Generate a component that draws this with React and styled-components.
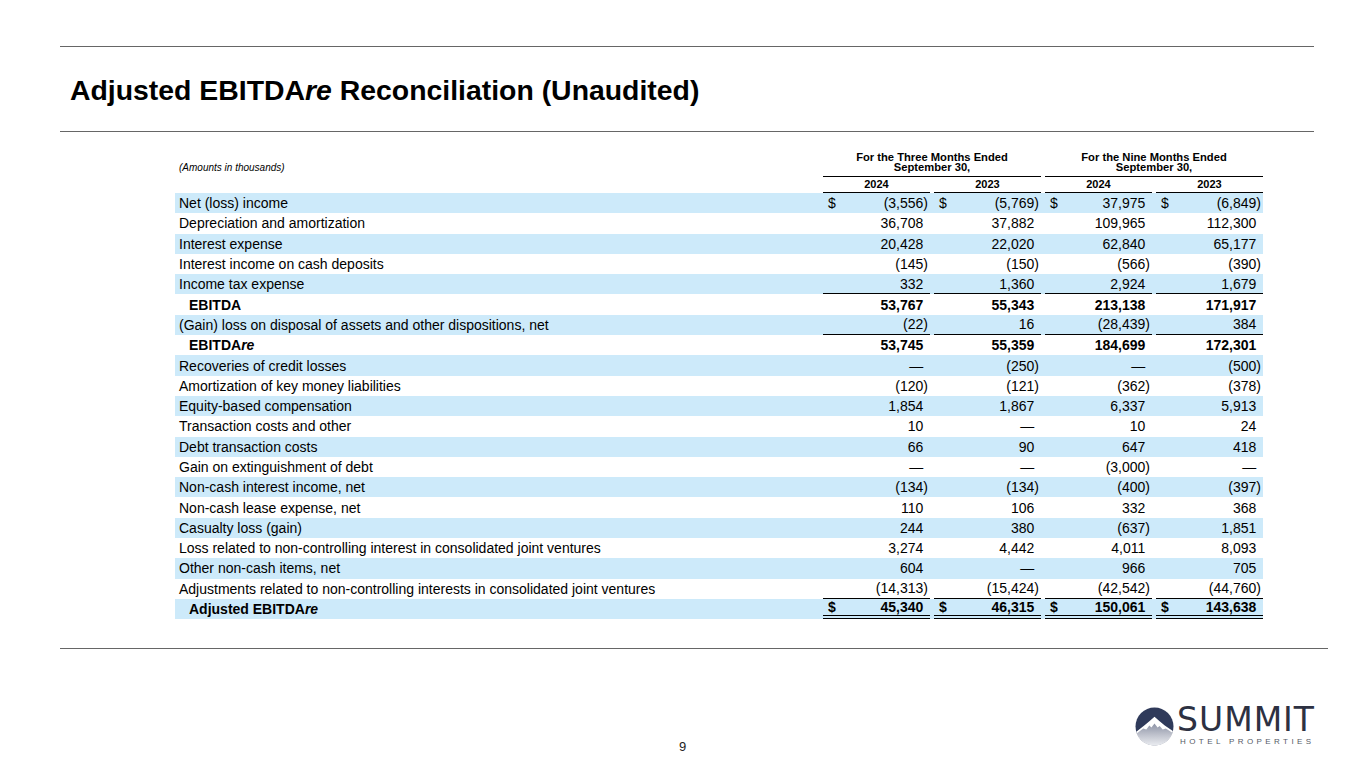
import React from 'react';
import styled, { createGlobalStyle } from 'styled-components';

const GlobalStyle = createGlobalStyle`
  html, body {
    margin: 0;
    padding: 0;
    background: #fff;
  }
  body {
    font-family: "Liberation Sans", Arial, sans-serif;
    color: #000;
  }
`;

const Page = styled.div`
  width: 1365px;
  height: 768px;
  display: flex;
  flex-direction: column;
  overflow: hidden;
`;

const Rule = styled.div`
  height: 0;
  border-top: 1.5px solid #666;
  margin: ${(p) => p.$margin || '0'};
`;

const Title = styled.h1`
  margin: 0;
  height: 84px;
  padding: 3px 0 0 70px;
  box-sizing: border-box;
  display: flex;
  align-items: center;
  font-size: 28.4px;
  font-weight: 700;
  em {
    font-style: italic;
  }
`;

const Table = styled.div`
  margin: 16px 0 0 175px;
  width: 1088px;
`;

const Row = styled.div`
  display: grid;
  grid-template-columns: 644px repeat(4, 107px);
  column-gap: 4px;
  height: ${(p) => p.$height || '20.3px'};
  background: ${(p) => (p.$shaded ? '#cdeafa' : 'transparent')};
  font-size: 14px;
  line-height: 1;
`;

const Label = styled.div`
  display: flex;
  align-items: center;
  padding-left: ${(p) => (p.$indent ? '14px' : '4px')};
  font-weight: ${(p) => (p.$bold ? 700 : 400)};
  white-space: nowrap;
  em {
    font-style: italic;
  }
`;

const Cell = styled.div`
  display: flex;
  align-items: center;
  justify-content: space-between;
  padding: 0 2px 0 5px;
  box-sizing: border-box;
  font-weight: ${(p) => (p.$bold ? 700 : 400)};
  border-bottom: ${(p) =>
    p.$rule === 'double'
      ? '4px double #000'
      : p.$rule === 'single'
      ? '1.5px solid #000'
      : 'none'};
  white-space: nowrap;
`;

const Hang = styled.span`
  visibility: hidden;
`;

const Note = styled.div`
  display: flex;
  align-items: flex-end;
  padding: 0 0 4px 4px;
  font-size: 10px;
  font-style: italic;
`;

const GroupHead = styled.div`
  grid-column: span 2;
  display: flex;
  flex-direction: column;
  justify-content: flex-end;
  align-items: center;
  padding-bottom: 4px;
  font-size: 11.2px;
  font-weight: 700;
  line-height: 10px;
  border-bottom: 1.5px solid #000;
  text-align: center;
`;

const YearHead = styled.div`
  display: flex;
  align-items: center;
  justify-content: center;
  font-size: 11px;
  font-weight: 700;
  border-bottom: 1.5px solid #000;
`;

const Footer = styled.div`
  flex: 1;
  display: grid;
  grid-template-columns: 1fr auto 1fr;
  align-items: end;
  padding-bottom: 14px;
`;

const PageNum = styled.div`
  font-size: 13px;
  color: #222;
`;

const Logo = styled.div`
  justify-self: end;
  margin-right: 50px;
  display: flex;
  align-items: center;
  gap: 3px;
  padding-bottom: 7px;
`;

const LogoText = styled.div`
  display: flex;
  flex-direction: column;
  color: #2d3142;
`;

const Brand = styled.div`
  font-family: "DejaVu Sans", "Liberation Sans", sans-serif;
  font-size: 33px;
  font-weight: 400;
  letter-spacing: 1px;
  line-height: 28px;
`;

const Tagline = styled.div`
  font-size: 8px;
  letter-spacing: 3.4px;
  color: #555a66;
  line-height: 10px;
  margin-top: 3px;
  padding-left: 3px;
`;

const rows = [
  { label: 'Net (loss) income', v: ['(3,556)', '(5,769)', '37,975', '(6,849)'], dollar: true },
  { label: 'Depreciation and amortization', v: ['36,708', '37,882', '109,965', '112,300'] },
  { label: 'Interest expense', v: ['20,428', '22,020', '62,840', '65,177'] },
  { label: 'Interest income on cash deposits', v: ['(145)', '(150)', '(566)', '(390)'] },
  { label: 'Income tax expense', v: ['332', '1,360', '2,924', '1,679'], rule: 'single' },
  { label: 'EBITDA', v: ['53,767', '55,343', '213,138', '171,917'], total: true },
  { label: '(Gain) loss on disposal of assets and other dispositions, net', v: ['(22)', '16', '(28,439)', '384'], rule: 'single' },
  { label: <>EBITDA<em>re</em></>, v: ['53,745', '55,359', '184,699', '172,301'], total: true },
  { label: 'Recoveries of credit losses', v: ['—', '(250)', '—', '(500)'] },
  { label: 'Amortization of key money liabilities', v: ['(120)', '(121)', '(362)', '(378)'] },
  { label: 'Equity-based compensation', v: ['1,854', '1,867', '6,337', '5,913'] },
  { label: 'Transaction costs and other', v: ['10', '—', '10', '24'] },
  { label: 'Debt transaction costs', v: ['66', '90', '647', '418'] },
  { label: 'Gain on extinguishment of debt', v: ['—', '—', '(3,000)', '—'] },
  { label: 'Non-cash interest income, net', v: ['(134)', '(134)', '(400)', '(397)'] },
  { label: 'Non-cash lease expense, net', v: ['110', '106', '332', '368'] },
  { label: 'Casualty loss (gain)', v: ['244', '380', '(637)', '1,851'] },
  { label: 'Loss related to non-controlling interest in consolidated joint ventures', v: ['3,274', '4,442', '4,011', '8,093'] },
  { label: 'Other non-cash items, net', v: ['604', '—', '966', '705'] },
  { label: 'Adjustments related to non-controlling interests in consolidated joint ventures', v: ['(14,313)', '(15,424)', '(42,542)', '(44,760)'], rule: 'single' },
  { label: <>Adjusted EBITDA<em>re</em></>, v: ['45,340', '46,315', '150,061', '143,638'], total: true, dollar: true, rule: 'double' },
];

function Value({ text }) {
  const hang = !text.endsWith(')');
  return (
    <span>
      {text}
      {hang && <Hang>)</Hang>}
    </span>
  );
}

function SummitMark() {
  return (
    <svg width="39" height="39" viewBox="0 0 38 38">
      <defs>
        <clipPath id="disc">
          <circle cx="19" cy="19" r="18.5" />
        </clipPath>
        <linearGradient id="slope" x1="0" y1="0" x2="0" y2="1">
          <stop offset="0" stopColor="#8d93a6" />
          <stop offset="0.55" stopColor="#c3c6d0" />
          <stop offset="1" stopColor="#eceef2" />
        </linearGradient>
      </defs>
      <g clipPath="url(#disc)">
        <rect width="38" height="38" fill="#2f3a5a" />
        <path d="M0 25 L9 18 L14 14 L19 9.5 L24 14 L29 18 L38 24 L38 38 L0 38 Z" fill="#ffffff" />
        <path
          d="M0 27 L8 21 L11 22 L14 18 L16 20 L19 16 L22 20 L24 18.5 L27 22 L30 21 L38 26 L38 38 L0 38 Z"
          fill="url(#slope)"
        />
      </g>
    </svg>
  );
}

export default function App() {
  return (
    <>
      <GlobalStyle />
      <Page>
        <Rule $margin="46px 51px 0 60px" />
        <Title>
          Adjusted EBITDA<em>re</em>&nbsp;Reconciliation (Unaudited)
        </Title>
        <Rule $margin="0 51px 0 60px" />
        <Table>
          <Row $height="29px">
            <Note>(Amounts in thousands)</Note>
            <GroupHead>
              <span>For the Three Months Ended</span>
              <span>September 30,</span>
            </GroupHead>
            <GroupHead>
              <span>For the Nine Months Ended</span>
              <span>September 30,</span>
            </GroupHead>
          </Row>
          <Row $height="16px">
            <div />
            <YearHead>2024</YearHead>
            <YearHead>2023</YearHead>
            <YearHead>2024</YearHead>
            <YearHead>2023</YearHead>
          </Row>
          {rows.map((r, i) => (
            <Row key={i} $shaded={i % 2 === 0}>
              <Label $indent={r.total} $bold={r.total}>
                {r.label}
              </Label>
              {r.v.map((val, j) => (
                <Cell key={j} $bold={r.total} $rule={r.rule}>
                  <span>{r.dollar ? '$' : ''}</span>
                  <Value text={val} />
                </Cell>
              ))}
            </Row>
          ))}
        </Table>
        <Rule $margin="29px 37px 0 60px" />
        <Footer>
          <div />
          <PageNum>9</PageNum>
          <Logo>
            <SummitMark />
            <LogoText>
              <Brand>SUMMIT</Brand>
              <Tagline>HOTEL PROPERTIES</Tagline>
            </LogoText>
          </Logo>
        </Footer>
      </Page>
    </>
  );
}
